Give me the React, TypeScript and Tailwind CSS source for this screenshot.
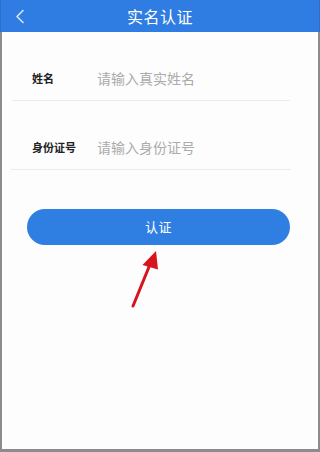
import React from "react";

export default function App() {
  return (
    <div
      className="relative flex w-[320px] h-[452px] flex-col overflow-hidden bg-[#fdfdfd]"
      style={{ fontFamily: '"Noto Sans CJK SC", "Noto Sans", sans-serif' }}
    >
      <div className="relative flex h-[32px] shrink-0 items-center justify-center bg-[#2f7de2] border-x border-[#2a6fcc]">
        <svg
          className="absolute left-[13px] top-[9px]"
          width="12"
          height="15"
          viewBox="0 0 12 15"
          fill="none"
        >
          <path d="M9 1.5 L3 7.5 L9 13.5" stroke="#d6e6ff" strokeWidth="1.6" strokeLinecap="round" strokeLinejoin="round" />
        </svg>
        <span className="text-[16px] leading-none text-white tracking-[0.5px]">实名认证</span>
      </div>

      <div className="flex-1 border-x-2 border-b-[3px] border-[#8c8c8c]">
        <div className="pt-[25px]">
          <div className="ml-[10px] mr-[28px] flex h-[44px] items-center border-b border-[#ececec] pl-[20px]">
            <span className="w-[65px] text-[11px] font-bold text-[#222]">姓名</span>
            <span className="text-[14px] text-[#ababab]">请输入真实姓名</span>
          </div>
        </div>

        <div className="pt-[25px]">
          <div className="ml-[9px] mr-[27px] flex h-[44px] items-center border-b border-[#ececec] pl-[21px]">
            <span className="w-[65px] text-[11px] font-bold text-[#222]">身份证号</span>
            <span className="text-[14px] text-[#ababab]">请输入身份证号</span>
          </div>
        </div>

        <div className="ml-[25px] mr-[28px] mt-[39px] flex h-[36px] items-center justify-center rounded-full bg-[#2f7fe3]">
          <span className="text-[13px] text-white tracking-[0.5px]">认证</span>
        </div>
      </div>

      <svg
        className="absolute left-0 top-0"
        width="320"
        height="452"
        viewBox="0 0 320 452"
        fill="none"
      >
        <line x1="133" y1="306" x2="151" y2="262" stroke="#d7141e" strokeWidth="3" strokeLinecap="round" />
        <polygon points="156,251 142.5,265 158,269.5" fill="#d7141e" />
      </svg>
    </div>
  );
}
